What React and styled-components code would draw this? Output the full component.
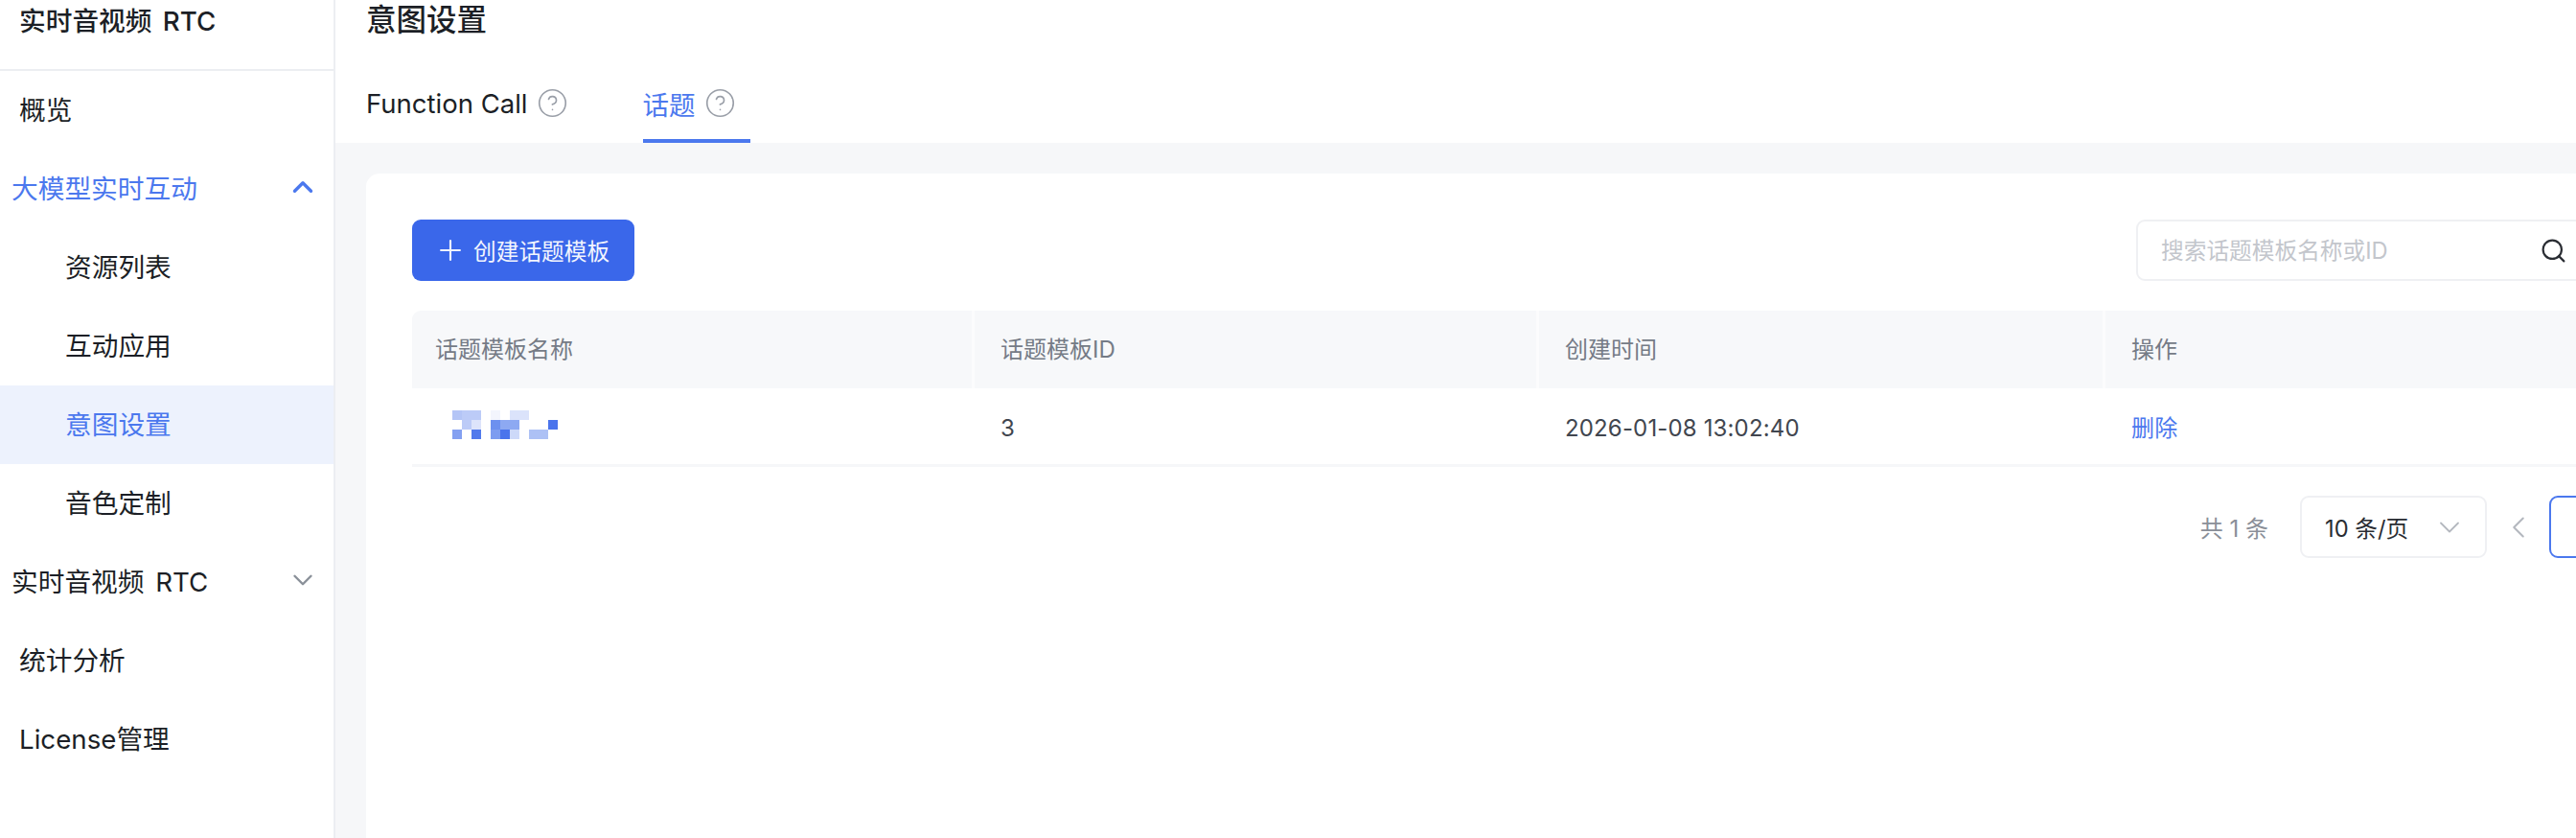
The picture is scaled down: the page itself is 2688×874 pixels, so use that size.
import styled, { createGlobalStyle } from "styled-components"
import { Plus, Search, ChevronDown, ChevronUp, ChevronLeft, ChevronRight, CircleHelp } from "lucide-react"

const GlobalStyle = createGlobalStyle`
    html, body {
        margin: 0;
        padding: 0;
        height: 874px;
        overflow: hidden;
        background: #fff;
    }
    body {
        font-family: Inter, "Noto Sans CJK SC", sans-serif;
        color: #1c1f26;
    }
`

const Layout = styled.div`
    display: flex;
    width: 2688px;
    height: 874px;
    overflow: hidden;
`

const Sidebar = styled.aside`
    flex: 0 0 350px;
    box-sizing: border-box;
    background: #fff;
    border-right: 2px solid #eceef2;
`

const Brand = styled.div`
    box-sizing: border-box;
    height: 74px;
    padding-left: 20px;
    line-height: 44px;
    font-size: 27.7px;
    font-weight: 500;
    word-spacing: 4px;
    border-bottom: 2px solid #eceef2;
`

const MenuItem = styled.div`
    display: flex;
    align-items: center;
    justify-content: space-between;
    box-sizing: border-box;
    height: 82px;
    padding: 0 15px 4px ${(p) => p.$indent}px;
    font-size: 27.7px;
    word-spacing: 4px;
    color: ${(p) => (p.$blue ? "#4b78ee" : "#1c1f26")};
    background: ${(p) => (p.$active ? "#edf2fd" : "transparent")};

    svg {
        color: ${(p) => (p.$blue ? "#4b78ee" : "#8a9099")};
    }
`

const Main = styled.main`
    flex: 1;
    min-width: 0;
    background: #f6f7f9;
`

const Header = styled.header`
    box-sizing: border-box;
    height: 149px;
    padding-left: 32px;
    background: #fff;
`

const PageTitle = styled.div`
    height: 68px;
    line-height: 42px;
    font-size: 31.5px;
    font-weight: 500;
`

const Tabs = styled.div`
    display: flex;
    gap: 63px;
`

const Tab = styled.div`
    display: flex;
    align-items: center;
    gap: 9px;
    box-sizing: border-box;
    height: 81px;
    padding: 2px 15px 0 0;
    font-size: 27.5px;
    color: ${(p) => (p.$active ? "#4b78ee" : "#1c1f26")};
    border-bottom: 4px solid ${(p) => (p.$active ? "#4b78ee" : "transparent")};

    svg {
        color: #9a9fa8;
    }
`

const Card = styled.section`
    box-sizing: border-box;
    width: 2456px;
    height: 720px;
    margin: 32px 0 0 32px;
    padding: 48px;
    background: #fff;
    border-radius: 14px;
`

const Toolbar = styled.div`
    display: flex;
    justify-content: space-between;
    padding-right: 90px;
`

const CreateButton = styled.button`
    display: flex;
    align-items: center;
    gap: 7px;
    box-sizing: border-box;
    width: 232px;
    height: 64px;
    padding: 0 0 0 23px;
    border: none;
    border-radius: 9px;
    background: #3a67ea;
    color: #f2f5fe;
    font: inherit;
    font-size: 23.7px;
`

const SearchBox = styled.div`
    display: flex;
    align-items: center;
    box-sizing: border-box;
    width: 471px;
    height: 64px;
    padding: 0 19px 0 24px;
    border: 2px solid #eff0f3;
    border-radius: 9px;

    svg {
        color: #2a2d33;
    }
`

const SearchInput = styled.input`
    flex: 1;
    min-width: 0;
    border: none;
    outline: none;
    padding: 0;
    font: inherit;
    font-size: 23.7px;

    &::placeholder {
        color: #c3c6cc;
        opacity: 1;
    }
`

const Row = styled.div`
    display: grid;
    grid-template-columns: 587px 589px 591px 1fr;
    margin-top: ${(p) => p.$top || 0}px;
`

const HeadCell = styled.div`
    box-sizing: border-box;
    height: 81px;
    line-height: 81px;
    padding-left: 27px;
    font-size: 24px;
    color: #757b86;
    background: #f7f8fa;
    border-right: 3px solid #fcfcfd;

    &:first-child {
        padding-left: 24px;
        border-top-left-radius: 9px;
    }
`

const BodyCell = styled.div`
    display: flex;
    align-items: center;
    box-sizing: border-box;
    height: 82px;
    padding: ${(p) => (p.$link ? 0 : 3)}px 0 0 27px;
    font-size: 24px;
    letter-spacing: 0.15px;
    color: ${(p) => (p.$link ? "#4b78ee" : "#41464f")};
    border-bottom: 3px solid #f6f7f9;

    &:first-child {
        padding: 0 0 3px 42px;
    }
`

const Pager = styled.div`
    display: flex;
    align-items: center;
    justify-content: flex-end;
    height: 65px;
    margin-top: 30px;
`

const Total = styled.span`
    margin-right: 33px;
    font-size: 24px;
    color: #8a8f98;
`

const PageSize = styled.div`
    display: flex;
    align-items: center;
    justify-content: space-between;
    box-sizing: border-box;
    width: 195px;
    height: 65px;
    padding: 0 19px 0 24px;
    border: 2px solid #eff0f3;
    border-radius: 9px;
    font-size: 23.7px;
    color: #2a2d33;

    svg {
        color: #b4b8bf;
    }
`

const PageArrow = styled.div`
    display: flex;
    align-items: center;
    justify-content: center;
    width: 65px;
    height: 65px;
    color: #b4b8bf;
`

const PageNumber = styled.div`
    display: flex;
    align-items: center;
    justify-content: center;
    box-sizing: border-box;
    width: 65px;
    height: 65px;
    border: 2px solid #4b78ee;
    border-radius: 9px;
    font-size: 23.7px;
    color: #4b78ee;
`

// 名称列被打码的部分
const mosaic = [
    [0, 0, "#b4c5f6"], [1, 0, "#bccbf7"], [2, 0, "#bccbf7"], [4, 0, "#f3f5fd"], [6, 0, "#dbe3fb"], [7, 0, "#dbe3fb"],
    [1, 1, "#bccbf7"], [2, 1, "#dde4fb"], [4, 1, "#6d90ef"], [5, 1, "#8da9f2"], [6, 1, "#8da9f2"], [10, 1, "#4a74ec"],
    [0, 2, "#84a0f1"], [2, 2, "#517aec"], [4, 2, "#7d9cf0"], [5, 2, "#4a74ec"], [6, 2, "#cdd9f9"], [8, 2, "#adc1f5"], [9, 2, "#adc1f5"],
]

const Mosaic = () => (
    <svg width="110" height="30" viewBox="0 0 110 30">
        {mosaic.map(([x, y, fill]) => (
            <rect key={`${x}-${y}`} x={x * 10} y={y * 10} width="10" height="10" fill={fill} />
        ))}
    </svg>
)

const HelpIcon = () => <CircleHelp size={33} strokeWidth={1.2} />

const App = () => {
    return (
        <Layout>
            <GlobalStyle />
            <Sidebar>
                <Brand>实时音视频 RTC</Brand>
                <MenuItem $indent={20}>概览</MenuItem>
                <MenuItem $indent={12} $blue>
                    大模型实时互动
                    <ChevronUp size={34} strokeWidth={2.4} />
                </MenuItem>
                <MenuItem $indent={68}>资源列表</MenuItem>
                <MenuItem $indent={68}>互动应用</MenuItem>
                <MenuItem $indent={68} $blue $active>意图设置</MenuItem>
                <MenuItem $indent={68}>音色定制</MenuItem>
                <MenuItem $indent={12}>
                    实时音视频 RTC
                    <ChevronDown size={34} strokeWidth={1.7} />
                </MenuItem>
                <MenuItem $indent={20}>统计分析</MenuItem>
                <MenuItem $indent={20}>License管理</MenuItem>
            </Sidebar>
            <Main>
                <Header>
                    <PageTitle>意图设置</PageTitle>
                    <Tabs>
                        <Tab>Function Call <HelpIcon /></Tab>
                        <Tab $active>话题 <HelpIcon /></Tab>
                    </Tabs>
                </Header>
                <Card>
                    <Toolbar>
                        <CreateButton>
                            <Plus size={34} strokeWidth={1.5} />
                            创建话题模板
                        </CreateButton>
                        <SearchBox>
                            <SearchInput placeholder="搜索话题模板名称或ID" />
                            <Search size={29} strokeWidth={1.8} />
                        </SearchBox>
                    </Toolbar>
                    <Row $top={31}>
                        <HeadCell>话题模板名称</HeadCell>
                        <HeadCell>话题模板ID</HeadCell>
                        <HeadCell>创建时间</HeadCell>
                        <HeadCell>操作</HeadCell>
                    </Row>
                    <Row>
                        <BodyCell><Mosaic /></BodyCell>
                        <BodyCell>3</BodyCell>
                        <BodyCell>2026-01-08 13:02:40</BodyCell>
                        <BodyCell $link>删除</BodyCell>
                    </Row>
                    <Pager>
                        <Total>共 1 条</Total>
                        <PageSize>
                            10 条/页
                            <ChevronDown size={36} strokeWidth={1.2} />
                        </PageSize>
                        <PageArrow><ChevronLeft size={38} strokeWidth={1.3} /></PageArrow>
                        <PageNumber>1</PageNumber>
                        <PageArrow><ChevronRight size={38} strokeWidth={1.3} /></PageArrow>
                    </Pager>
                </Card>
            </Main>
        </Layout>
    )
}

export default App
